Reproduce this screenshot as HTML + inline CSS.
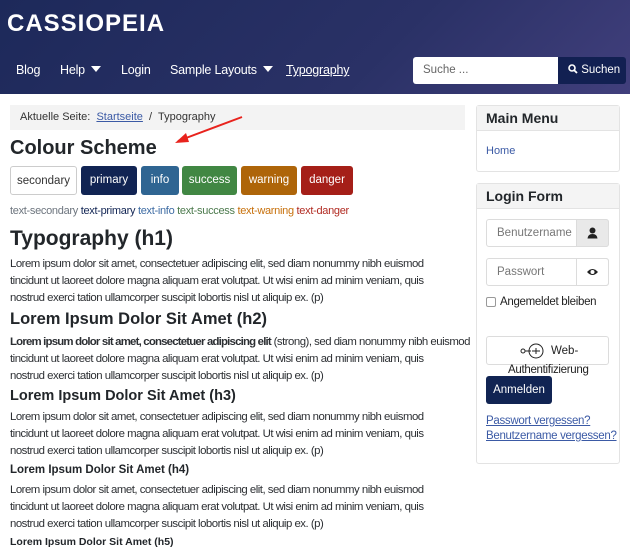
<!DOCTYPE html>
<html><head><meta charset="utf-8"><style>
*{margin:0;padding:0;box-sizing:border-box}
body{width:630px;height:543px;overflow:hidden;background:#fff;font-family:"Liberation Sans",sans-serif;color:#22262a;position:relative}
.a{position:absolute;white-space:nowrap}
.hd{left:0;top:0;width:630px;height:94px;background:linear-gradient(135deg,#1d295a 0%,#2a3166 60%,#413f7c 100%)}
.logo{left:7px;top:10px;font-size:24px;font-weight:bold;color:#fff;letter-spacing:1px}
.nav{top:63px;color:#fff;font-size:12.5px;letter-spacing:-0.2px}
.tri{display:inline-block;width:0;height:0;border-left:5px solid transparent;border-right:5px solid transparent;border-top:6px solid #fff;margin-left:6px;vertical-align:2px}
.p{font-size:11.4px;letter-spacing:-0.5px;color:#2c2f33;line-height:17px}
.p b{letter-spacing:-0.8px}
.h{font-weight:bold;color:#22262a;font-family:"Liberation Sans",sans-serif}
.btn{top:166px;height:29px;border-radius:3px;color:#fff;font-size:11.5px;text-align:center;line-height:29px}
.card{border:1px solid #e3e3e3;border-radius:3px;left:476px;width:144px}
.ch{background:#f4f4f4;border-bottom:1px solid #e3e3e3;height:25px;font-weight:bold;font-size:14px;padding:4px 9px}
.in{left:486px;width:123px;height:28px;border:1px solid #dcdcdc;border-radius:3px;font-size:11.5px;color:#777;padding:7px 0 0 10px}
.lk{color:#3b5aa5;text-decoration:underline;font-size:11.5px;letter-spacing:-0.3px}
</style></head><body>
<div class="a hd"></div>
<div class="a logo">CASSIOPEIA</div>
<div class="a nav" style="left:16px">Blog</div>
<div class="a nav" style="left:60px">Help<span class="tri"></span></div>
<div class="a nav" style="left:121px">Login</div>
<div class="a nav" style="left:170px">Sample Layouts<span class="tri"></span></div>
<div class="a nav" style="left:286px;text-decoration:underline">Typography</div>
<div class="a" style="left:413px;top:57px;width:146px;height:27px;background:#fff;border-radius:3px 0 0 3px;font-size:11.5px;color:#666;padding:7px 10px">Suche ...</div>
<div class="a" style="left:558px;top:57px;width:68px;height:27px;background:#122052;border-radius:0 3px 3px 0;color:#fff;font-size:11.5px;padding:7px 0 0 10px"><svg width="10" height="10" viewBox="0 0 10 10" style="vertical-align:-1px"><circle cx="4" cy="4" r="3" fill="none" stroke="#fff" stroke-width="1.6"/><path d="M6.2 6.2L9 9" stroke="#fff" stroke-width="1.8"/></svg> Suchen</div>

<div class="a" style="left:10px;top:105px;width:455px;height:25px;background:#f3f3f3"></div>
<div class="a" style="left:20px;top:111px;font-size:11px;color:#333">Aktuelle Seite:&nbsp; <span style="color:#3b5aa5;text-decoration:underline">Startseite</span> &nbsp;/&nbsp; Typography</div>
<div class="a h" style="left:10px;top:137px;font-size:20px">Colour Scheme</div>
<svg class="a" style="left:170px;top:112px" width="80" height="36"><path d="M72 5L8 29" stroke="#e8231d" stroke-width="2"/><path d="M5 31L16 21L19 30Z" fill="#e8231d"/></svg>

<div class="a btn" style="left:10px;width:67px;border:1px solid #ccc;color:#333;background:#fff">secondary</div>
<div class="a btn" style="left:81px;width:56px;background:#112453">primary</div>
<div class="a btn" style="left:141px;width:38px;background:#2f6592">info</div>
<div class="a btn" style="left:182px;width:55px;background:#418743">success</div>
<div class="a btn" style="left:241px;width:56px;background:#ae6509">warning</div>
<div class="a btn" style="left:301px;width:52px;background:#a51f18">danger</div>
<div class="a" style="left:10px;top:205px;font-size:11px;letter-spacing:-0.3px"><span style="color:#6d757e">text-secondary</span> <span style="color:#112453">text-primary</span> <span style="color:#3d6ba3">text-info</span> <span style="color:#4c7a4d">text-success</span> <span style="color:#c7700b">text-warning</span> <span style="color:#b12b22">text-danger</span></div>

<div class="a h" style="left:10px;top:227px;font-size:21px">Typography (h1)</div>
<div class="a p" style="left:10px;top:256px">Lorem ipsum dolor sit amet, consectetuer adipiscing elit, sed diam nonummy nibh euismod<br>tincidunt ut laoreet dolore magna aliquam erat volutpat. Ut wisi enim ad minim veniam, quis<br>nostrud exerci tation ullamcorper suscipit lobortis nisl ut aliquip ex. (p)</div>
<div class="a h" style="left:10px;top:310px;font-size:16.5px">Lorem Ipsum Dolor Sit Amet (h2)</div>
<div class="a p" style="left:10px;top:334px"><b>Lorem ipsum dolor sit amet, consectetuer adipiscing elit</b> (strong), sed diam nonummy nibh euismod<br>tincidunt ut laoreet dolore magna aliquam erat volutpat. Ut wisi enim ad minim veniam, quis<br>nostrud exerci tation ullamcorper suscipit lobortis nisl ut aliquip ex. (p)</div>
<div class="a h" style="left:10px;top:388px;font-size:14.5px">Lorem Ipsum Dolor Sit Amet (h3)</div>
<div class="a p" style="left:10px;top:409px">Lorem ipsum dolor sit amet, consectetuer adipiscing elit, sed diam nonummy nibh euismod<br>tincidunt ut laoreet dolore magna aliquam erat volutpat. Ut wisi enim ad minim veniam, quis<br>nostrud exerci tation ullamcorper suscipit lobortis nisl ut aliquip ex. (p)</div>
<div class="a h" style="left:10px;top:464px;font-size:11.5px">Lorem Ipsum Dolor Sit Amet (h4)</div>
<div class="a p" style="left:10px;top:482px">Lorem ipsum dolor sit amet, consectetuer adipiscing elit, sed diam nonummy nibh euismod<br>tincidunt ut laoreet dolore magna aliquam erat volutpat. Ut wisi enim ad minim veniam, quis<br>nostrud exerci tation ullamcorper suscipit lobortis nisl ut aliquip ex. (p)</div>
<div class="a h" style="left:10px;top:536px;font-size:10.5px">Lorem Ipsum Dolor Sit Amet (h5)</div>

<div class="a card" style="top:105px;height:67px"><div class="ch">Main Menu</div><div style="padding:14px 9px;font-size:11px;color:#3b5aa5">Home</div></div>
<div class="a card" style="top:183px;height:281px"><div class="ch">Login Form</div></div>
<div class="a in" style="top:219px">Benutzername</div>
<div class="a" style="left:576px;top:219px;width:33px;height:28px;background:#e9e9e9;border:1px solid #dcdcdc;border-radius:0 3px 3px 0"><svg width="31" height="26" viewBox="0 0 31 26"><circle cx="15.5" cy="10.5" r="3" fill="#222"/><path d="M10.5 18.5Q11 14 15.5 14Q20 14 20.5 18.5Z" fill="#222"/></svg></div>
<div class="a in" style="top:258px">Passwort</div>
<div class="a" style="left:576px;top:258px;width:33px;height:28px;border:1px solid #dcdcdc;border-radius:0 3px 3px 0"><svg width="31" height="26" viewBox="0 0 31 26"><path d="M10 13Q15.5 7 21 13Q15.5 19 10 13Z" fill="#222"/><circle cx="15.5" cy="13" r="2" fill="#fff"/></svg></div>
<div class="a" style="left:486px;top:297px;width:10px;height:10px;border:1px solid #999;border-radius:2px"></div>
<div class="a" style="left:500px;top:296px;font-size:11.5px;letter-spacing:-0.3px;color:#222">Angemeldet bleiben</div>
<div class="a" style="left:486px;top:336px;width:123px;height:29px;border:1px solid #dcdcdc;border-radius:3px"></div>
<svg class="a" style="left:519px;top:342px" width="30" height="18"><circle cx="4" cy="9" r="2" fill="none" stroke="#222"/><path d="M6 9H12" stroke="#222"/><circle cx="17" cy="9" r="7" fill="none" stroke="#222"/><path d="M13 9H21M17 6V12" stroke="#222"/></svg>
<div class="a" style="left:551px;top:345px;font-size:11.5px;color:#222">Web-</div>
<div class="a" style="left:508px;top:364px;font-size:11.5px;color:#222;letter-spacing:-0.3px">Authentifizierung</div>
<div class="a" style="left:486px;top:376px;width:66px;height:28px;background:#112453;border-radius:3px;color:#fff;font-size:11.5px;text-align:center;line-height:28px">Anmelden</div>
<div class="a lk" style="left:486px;top:415px">Passwort vergessen?</div>
<div class="a lk" style="left:486px;top:430px">Benutzername vergessen?</div>
</body></html>
